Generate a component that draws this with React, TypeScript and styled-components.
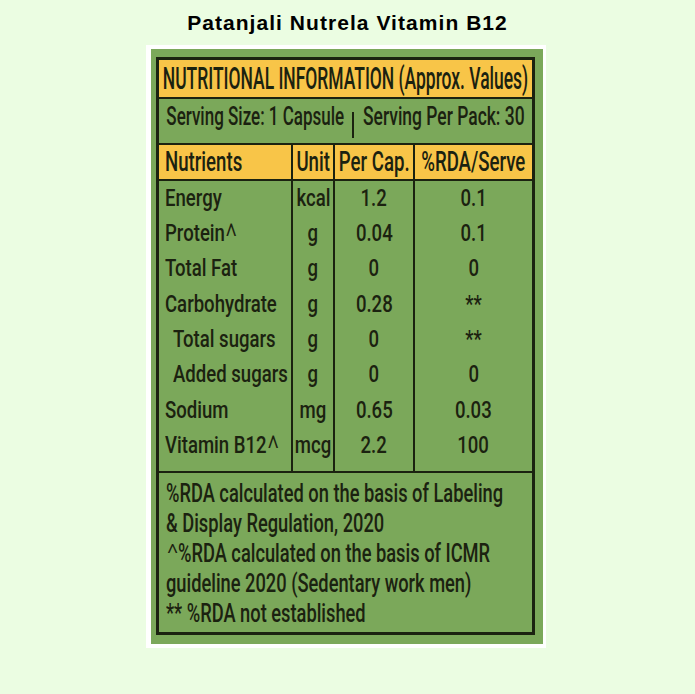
import React from 'react';
import styled, { createGlobalStyle, css } from 'styled-components';

const INK = '#1b2210';
const GREEN = '#7ba85a';
const YELLOW = '#f8c548';
const BG = '#ebfde2';

const GlobalStyle = createGlobalStyle`
  html, body { margin: 0; padding: 0; background: ${BG}; }
  body { font-family: Roboto, "Liberation Sans", sans-serif; color: ${INK}; }
`;

const Page = styled.main`
  width: 695px;
  min-height: 694px;
  background: ${BG};
  overflow: hidden;
`;

const Heading = styled.h1`
  margin: 0;
  height: 45px;
  box-sizing: border-box;
  padding-top: 12px;
  font-family: "Liberation Sans", Arial, sans-serif;
  font-weight: 700;
  font-size: 21px;
  line-height: 22px;
  letter-spacing: 1.05px;
  text-align: center;
  color: #000;
`;

const Frame = styled.section`
  width: 400px;
  margin-left: 146px;
  box-sizing: border-box;
  padding: 4px 3px 4px 5px;
  background: #ffffff;
`;

const Panel = styled.div`
  background: ${GREEN};
  padding: 8px 8px 9px 5px;
`;

const Table = styled.div`
  border: 3px solid ${INK};
  display: flex;
  flex-direction: column;
`;

const squeeze = css`
  display: inline-block;
  flex-shrink: 0;
  white-space: nowrap;
  line-height: 1;
  font-weight: 500;
  color: ${INK};
`;

const TitleBand = styled.div`
  height: 37px;
  background: ${YELLOW};
  border-bottom: 2px solid ${INK};
  display: flex;
  align-items: center;
  justify-content: center;
`;

const TitleText = styled.span`
  ${squeeze};
  font-size: 31px;
  transform: scaleX(0.563);
  transform-origin: center center;
`;

const ServingBand = styled.div`
  height: 44px;
  background: ${GREEN};
  border-bottom: 2px solid ${INK};
  display: grid;
  grid-template-columns: 193px 2px minmax(0, 1fr);
  align-items: start;
`;

const ServingSide = styled.div<{ $side: 'left' | 'right' }>`
  display: flex;
  justify-content: ${(p) => (p.$side === 'left' ? 'flex-end' : 'flex-start')};
  padding-top: 4px;
  padding-right: ${(p) => (p.$side === 'left' ? 8 : 0)}px;
  padding-left: ${(p) => (p.$side === 'right' ? 9 : 0)}px;
  min-width: 0;
`;

const ServingText = styled.span<{ $origin: 'left' | 'right'; $scale: number }>`
  ${squeeze};
  font-size: 26.7px;
  transform: scaleX(${(p) => p.$scale});
  transform-origin: ${(p) => p.$origin} center;
`;

const ServingBar = styled.div`
  width: 2px;
  height: 26px;
  margin-top: 13px;
  background: ${INK};
`;

const Grid = styled.div<{ $head?: boolean }>`
  display: grid;
  grid-template-columns: 134px 42px 80px minmax(0, 1fr);
  background: ${(p) => (p.$head ? YELLOW : GREEN)};
`;

const HeadRow = styled(Grid)`
  border-bottom: 2px solid ${INK};
`;

const Body = styled.div`
  border-bottom: 2px solid ${INK};
  background: ${GREEN};
`;

const Cell = styled.div<{ $align: 'left' | 'center'; $indent?: boolean; $final?: boolean; $h: number; $end?: boolean }>`
  display: flex;
  align-items: center;
  justify-content: ${(p) => (p.$align === 'left' ? 'flex-start' : 'center')};
  height: ${(p) => p.$h}px;
  padding-left: ${(p) => (p.$align === 'left' ? (p.$indent ? 14 : 6) : 0)}px;
  padding-bottom: ${(p) => (p.$end ? 7.5 : 0)}px;
  border-right: ${(p) => (p.$final ? 'none' : `2px solid ${INK}`)};
  min-width: 0;
`;

const HeadText = styled.span<{ $origin: 'left' | 'center' }>`
  ${squeeze};
  font-size: 28px;
  transform: scaleX(0.665);
  transform-origin: ${(p) => p.$origin} center;
`;

const CellText = styled.span<{ $origin: 'left' | 'center' }>`
  ${squeeze};
  font-size: 23.5px;
  transform: scaleX(0.79);
  transform-origin: ${(p) => p.$origin} center;
`;

const Caret = styled.span<{ $tall?: number }>`
  display: inline-block;
  line-height: 1;
  font-weight: 300;
  margin: 0 0.1em 0 0.14em;
  transform: scale(1.55, ${(p) => p.$tall ?? 1.5});
  transform-origin: 50% 15%;
`;

const Notes = styled.div`
  padding: 6px 0 3px 7px;
  display: flex;
  flex-direction: column;
`;

const NoteLine = styled.div`
  height: 30px;
  display: flex;
  align-items: center;
`;

const NoteText = styled.span`
  ${squeeze};
  font-size: 25px;
  transform: scaleX(0.731);
  transform-origin: left center;
`;

type Row = { name: string; caret?: boolean; indent?: boolean; unit: string; per: string; rda: string };

const rows: Row[] = [
  { name: 'Energy', unit: 'kcal', per: '1.2', rda: '0.1' },
  { name: 'Protein', caret: true, unit: 'g', per: '0.04', rda: '0.1' },
  { name: 'Total Fat', unit: 'g', per: '0', rda: '0' },
  { name: 'Carbohydrate', unit: 'g', per: '0.28', rda: '**' },
  { name: 'Total sugars', indent: true, unit: 'g', per: '0', rda: '**' },
  { name: 'Added sugars', indent: true, unit: 'g', per: '0', rda: '0' },
  { name: 'Sodium', unit: 'mg', per: '0.65', rda: '0.03' },
  { name: 'Vitamin B12', caret: true, unit: 'mcg', per: '2.2', rda: '100' },
];

const notes: React.ReactNode[] = [
  '%RDA calculated on the basis of Labeling',
  '& Display Regulation, 2020',
  <>
    <Caret $tall={1}>^</Caret>%RDA calculated on the basis of ICMR
  </>,
  'guideline 2020 (Sedentary work men)',
  '** %RDA not established',
];

export default function App() {
  return (
    <Page>
      <GlobalStyle />
      <Heading>Patanjali Nutrela Vitamin B12</Heading>
      <Frame>
        <Panel>
          <Table>
            <TitleBand>
              <TitleText>NUTRITIONAL INFORMATION (Approx. Values)</TitleText>
            </TitleBand>
            <ServingBand>
              <ServingSide $side="left">
                <ServingText $origin="right" $scale={0.637}>Serving Size: 1 Capsule</ServingText>
              </ServingSide>
              <ServingBar />
              <ServingSide $side="right">
                <ServingText $origin="left" $scale={0.654}>Serving Per Pack: 30</ServingText>
              </ServingSide>
            </ServingBand>
            <HeadRow $head>
              <Cell $align="left" $h={34}>
                <HeadText $origin="left">Nutrients</HeadText>
              </Cell>
              <Cell $align="center" $h={34}>
                <HeadText $origin="center">Unit</HeadText>
              </Cell>
              <Cell $align="center" $h={34}>
                <HeadText $origin="center">Per Cap.</HeadText>
              </Cell>
              <Cell $align="center" $h={34} $final>
                <HeadText $origin="center">%RDA/Serve</HeadText>
              </Cell>
            </HeadRow>
            <Body>
              {rows.map((r, i) => {
                const end = i === rows.length - 1;
                return (
                  <Grid key={r.name}>
                    <Cell $align="left" $indent={r.indent} $h={35.3} $end={end}>
                      <CellText $origin="left">
                        {r.name}
                        {r.caret && <Caret>^</Caret>}
                      </CellText>
                    </Cell>
                    <Cell $align="center" $h={35.3} $end={end}>
                      <CellText $origin="center">{r.unit}</CellText>
                    </Cell>
                    <Cell $align="center" $h={35.3} $end={end}>
                      <CellText $origin="center">{r.per}</CellText>
                    </Cell>
                    <Cell $align="center" $h={35.3} $end={end} $final>
                      <CellText $origin="center">{r.rda}</CellText>
                    </Cell>
                  </Grid>
                );
              })}
            </Body>
            <Notes>
              {notes.map((n, i) => (
                <NoteLine key={i}>
                  <NoteText>{n}</NoteText>
                </NoteLine>
              ))}
            </Notes>
          </Table>
        </Panel>
      </Frame>
    </Page>
  );
}
